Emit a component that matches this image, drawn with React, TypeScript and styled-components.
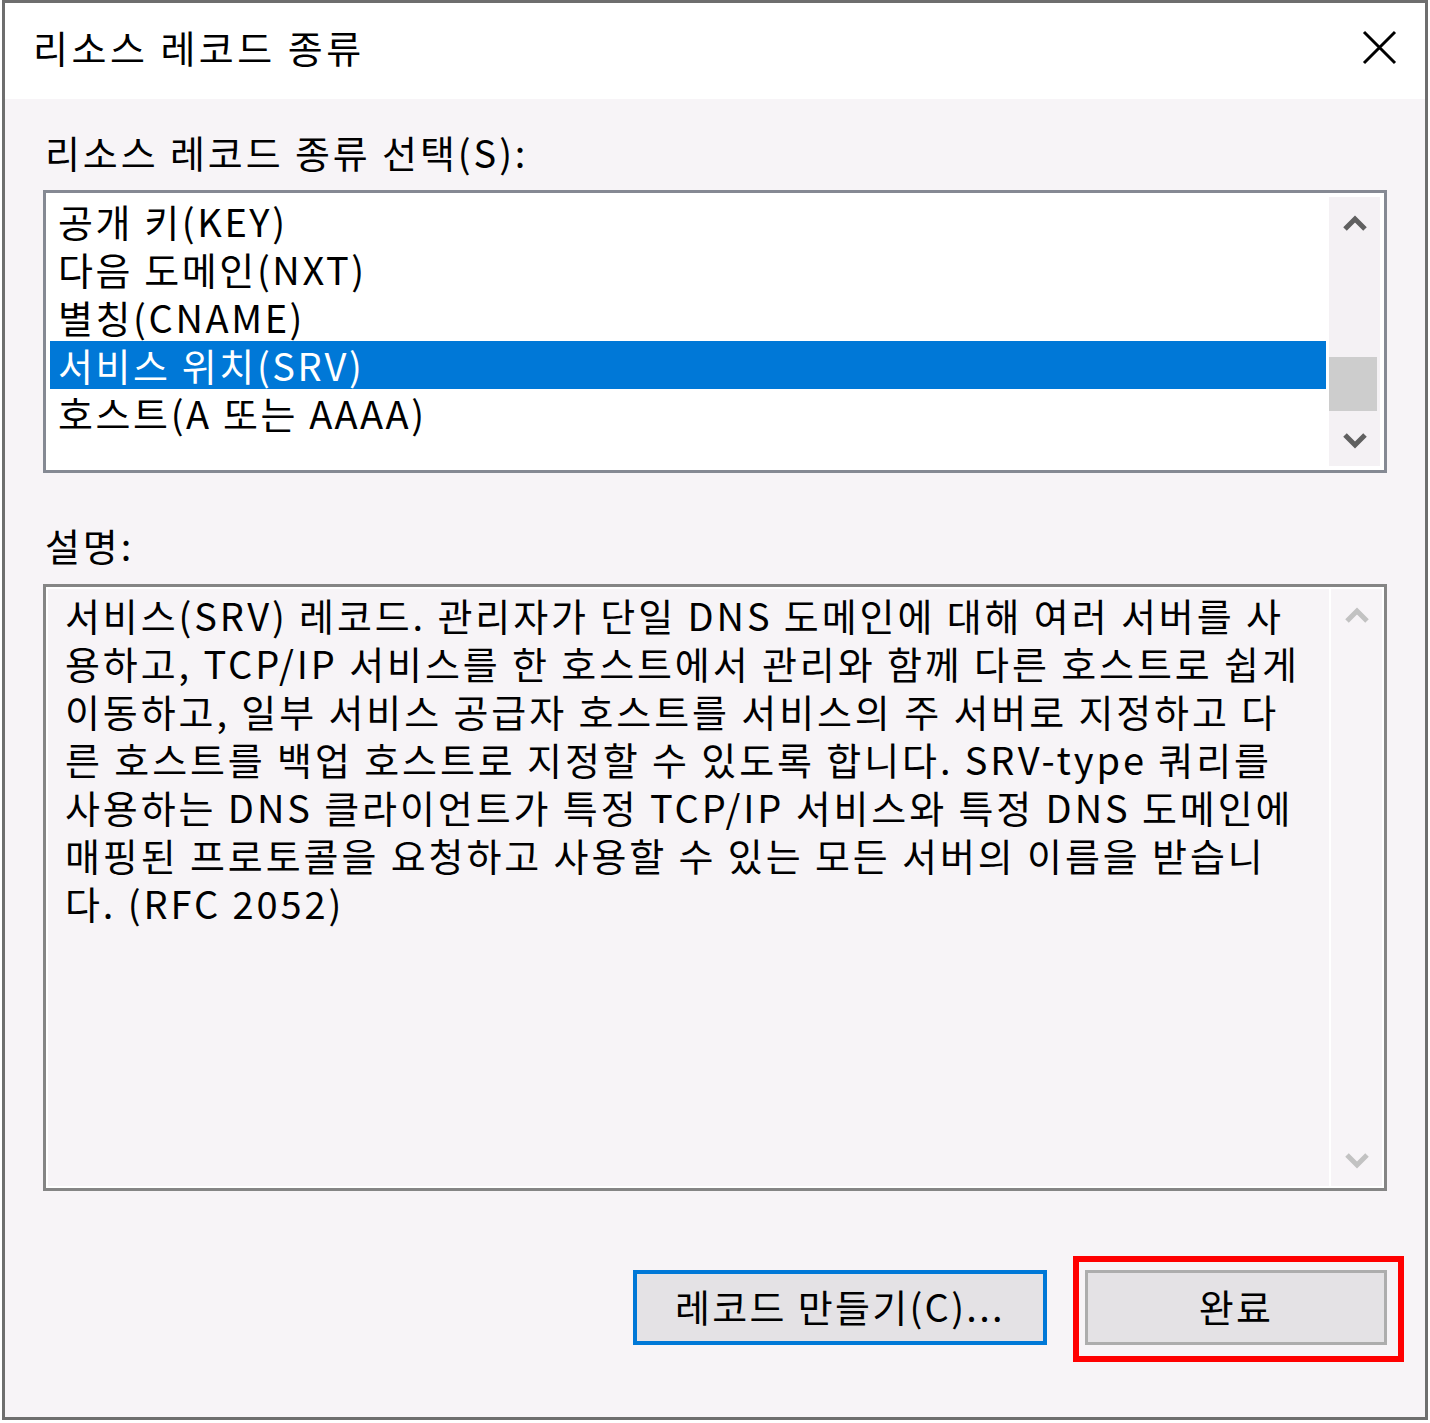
import React from "react";
import styled, { createGlobalStyle } from "styled-components";

const Global = createGlobalStyle`
  html, body { margin: 0; padding: 0; background: #ffffff; }
  body { font-family: "Noto Sans CJK KR", "Noto Sans", sans-serif; color: #000; }
  * { box-sizing: border-box; }
`;

const BODY_BG = "#f7f4f7";
const FONT = `"Noto Sans CJK KR", "Noto Sans", sans-serif`;

const Dialog = styled.div`
  margin-left: 2px;
  width: 1426px;
  height: 1420px;
  border: 3px solid #6e6e6e;
  background: ${BODY_BG};
  display: flex;
  flex-direction: column;
  font-family: ${FONT};
`;

const TitleBar = styled.div`
  height: 96px;
  background: #ffffff;
  display: flex;
  align-items: center;
  justify-content: space-between;
  padding: 0 26px 8px 28px;
`;

const TitleText = styled.div`
  font-size: 38px;
  letter-spacing: 3.5px;
  line-height: 48px;
`;

const CloseButton = styled.div`
  width: 40px;
  height: 40px;
  display: flex;
  align-items: center;
  justify-content: center;
`;

const Content = styled.div`
  flex: 1;
  display: flex;
  flex-direction: column;
  padding: 29px 38px 0 38px;
`;

const Label = styled.div<{ $mt?: number }>`
  font-size: 38px;
  line-height: 48px;
  letter-spacing: 2.9px;
  padding-left: 2px;
  margin-top: ${(p) => p.$mt ?? 0}px;
`;

const ListBox = styled.div`
  margin-top: 14px;
  height: 283px;
  border: 3px solid #858993;
  background: #ffffff;
  padding: 4px;
  display: flex;
  gap: 3px;
`;

const Rows = styled.div`
  flex: 1;
  display: flex;
  flex-direction: column;
`;

const Row = styled.div<{ $selected?: boolean }>`
  height: 48px;
  line-height: 48px;
  padding-left: 8px;
  font-size: 38px;
  letter-spacing: 2.6px;
  white-space: nowrap;
  background: ${(p) => (p.$selected ? "#0078d7" : "transparent")};
  color: ${(p) => (p.$selected ? "#ffffff" : "#000000")};
`;

const ScrollTrack = styled.div<{ $bg: string }>`
  width: 51px;
  flex: none;
  background: ${(p) => p.$bg};
  display: flex;
  flex-direction: column;
  align-items: stretch;
`;

const ArrowCell = styled.div`
  height: 51px;
  display: flex;
  align-items: center;
  justify-content: center;
`;

const TrackFill = styled.div`
  flex: 1;
  display: flex;
  flex-direction: column;
`;

const Thumb = styled.div<{ $top: number }>`
  margin-top: ${(p) => p.$top}px;
  width: 48px;
  height: 54px;
  background: #cdcdcd;
`;

const DescBox = styled.div`
  margin-top: 15px;
  height: 607px;
  border: 3px solid #858585;
  padding: 2px;
  background: #ffffff;
  display: flex;
  gap: 2px;
`;

const DescText = styled.div`
  flex: 1;
  min-width: 0;
  background: ${BODY_BG};
  padding: 2px 0 0 17px;
  font-size: 38px;
  line-height: 48px;
  letter-spacing: 2.9px;
  white-space: pre;
`;

const ButtonRow = styled.div`
  margin-top: 79px;
  display: flex;
  justify-content: flex-end;
  gap: 38px;
`;

const Button = styled.div<{ $w: number; $default?: boolean }>`
  position: relative;
  width: ${(p) => p.$w}px;
  height: 75px;
  border: ${(p) => (p.$default ? "4px solid #0078d7" : "3px solid #adadad")};
  background: #e4e2e5;
  display: flex;
  align-items: center;
  justify-content: center;
  padding-bottom: 4px;
  font-size: 38px;
  letter-spacing: 2.3px;
  font-family: ${FONT};
`;

const Highlight = styled.div`
  position: absolute;
  left: -15px;
  top: -17px;
  right: -20px;
  bottom: -20px;
  border: 6px solid #ff0000;
  pointer-events: none;
`;

const Chevron = ({ dir, color }: { dir: "up" | "down"; color: string }) => (
  <svg width="26" height="18" viewBox="0 0 26 18">
    <polyline
      points={dir === "up" ? "3,15 13,5 23,15" : "3,3 13,13 23,3"}
      fill="none"
      stroke={color}
      strokeWidth="5"
      strokeLinejoin="miter"
    />
  </svg>
);

const items = [
  "공개 키(KEY)",
  "다음 도메인(NXT)",
  "별칭(CNAME)",
  "서비스 위치(SRV)",
  "호스트(A 또는 AAAA)",
];

const description = [
  "서비스(SRV) 레코드. 관리자가 단일 DNS 도메인에 대해 여러 서버를 사",
  "용하고, TCP/IP 서비스를 한 호스트에서 관리와 함께 다른 호스트로 쉽게",
  "이동하고, 일부 서비스 공급자 호스트를 서비스의 주 서버로 지정하고 다",
  "른 호스트를 백업 호스트로 지정할 수 있도록 합니다. SRV-type 쿼리를",
  "사용하는 DNS 클라이언트가 특정 TCP/IP 서비스와 특정 DNS 도메인에",
  "매핑된 프로토콜을 요청하고 사용할 수 있는 모든 서버의 이름을 받습니",
  "다. (RFC 2052)",
].join("\n");

export default function App() {
  return (
    <>
      <Global />
      <Dialog>
        <TitleBar>
          <TitleText>리소스 레코드 종류</TitleText>
          <CloseButton>
            <svg width="35" height="35" viewBox="0 0 35 35">
              <path d="M2 2 L33 33 M33 2 L2 33" stroke="#000" strokeWidth="3" fill="none" />
            </svg>
          </CloseButton>
        </TitleBar>
        <Content>
          <Label>리소스 레코드 종류 선택(S):</Label>
          <ListBox>
            <Rows>
              {items.map((it, i) => (
                <Row key={it} $selected={i === 3}>
                  {it}
                </Row>
              ))}
            </Rows>
            <ScrollTrack $bg="#f4f1f4">
              <ArrowCell>
                <Chevron dir="up" color="#606060" />
              </ArrowCell>
              <TrackFill>
                <Thumb $top={109} />
              </TrackFill>
              <ArrowCell>
                <Chevron dir="down" color="#606060" />
              </ArrowCell>
            </ScrollTrack>
          </ListBox>
          <Label $mt={48}>설명:</Label>
          <DescBox>
            <DescText>{description}</DescText>
            <ScrollTrack $bg={BODY_BG}>
              <ArrowCell>
                <Chevron dir="up" color="#c2c2c2" />
              </ArrowCell>
              <TrackFill />
              <ArrowCell>
                <Chevron dir="down" color="#c2c2c2" />
              </ArrowCell>
            </ScrollTrack>
          </DescBox>
          <ButtonRow>
            <Button $w={414} $default>
              레코드 만들기(C)...
            </Button>
            <Button $w={302}>
              완료
              <Highlight />
            </Button>
          </ButtonRow>
        </Content>
      </Dialog>
    </>
  );
}
